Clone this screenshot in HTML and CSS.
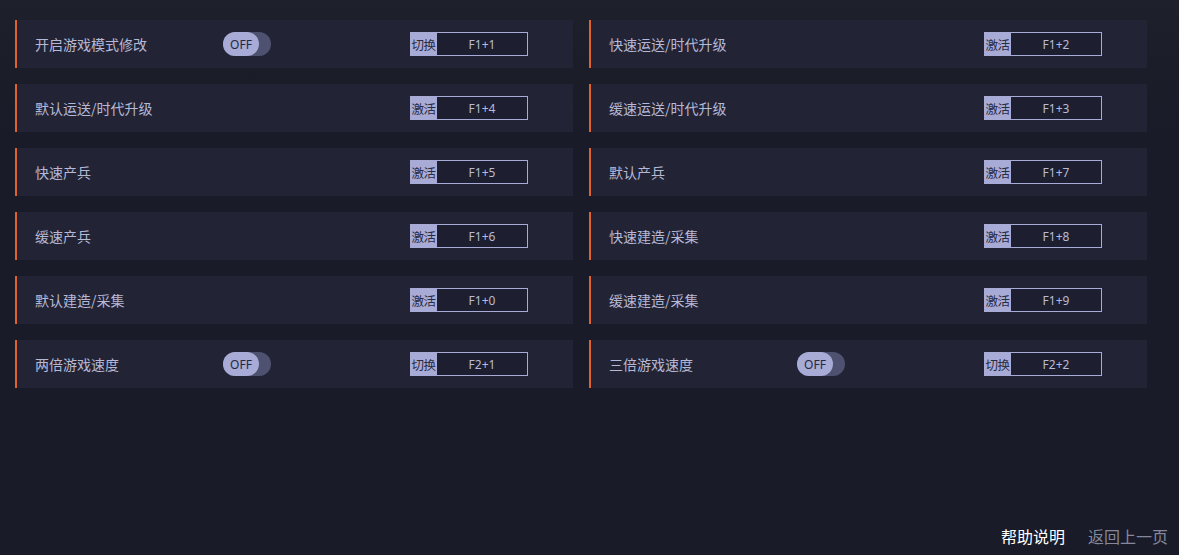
FILE: index.html
```html
<!DOCTYPE html>
<html lang="zh-CN">
<head>
<meta charset="utf-8">
<title>修改器</title>
<link rel="stylesheet" href="styles.css">
</head>
<body>
<div class="page">
  <main class="grid">
    <div class="card"><span class="label">开启游戏模式修改</span><span class="toggle"><span class="knob">OFF</span></span><span class="key"><span class="act">切换</span><span class="combo">F1+1</span></span></div>
    <div class="card"><span class="label">快速运送/时代升级</span><span class="key"><span class="act">激活</span><span class="combo">F1+2</span></span></div>
    <div class="card"><span class="label">默认运送/时代升级</span><span class="key"><span class="act">激活</span><span class="combo">F1+4</span></span></div>
    <div class="card"><span class="label">缓速运送/时代升级</span><span class="key"><span class="act">激活</span><span class="combo">F1+3</span></span></div>
    <div class="card"><span class="label">快速产兵</span><span class="key"><span class="act">激活</span><span class="combo">F1+5</span></span></div>
    <div class="card"><span class="label">默认产兵</span><span class="key"><span class="act">激活</span><span class="combo">F1+7</span></span></div>
    <div class="card"><span class="label">缓速产兵</span><span class="key"><span class="act">激活</span><span class="combo">F1+6</span></span></div>
    <div class="card"><span class="label">快速建造/采集</span><span class="key"><span class="act">激活</span><span class="combo">F1+8</span></span></div>
    <div class="card"><span class="label">默认建造/采集</span><span class="key"><span class="act">激活</span><span class="combo">F1+0</span></span></div>
    <div class="card"><span class="label">缓速建造/采集</span><span class="key"><span class="act">激活</span><span class="combo">F1+9</span></span></div>
    <div class="card"><span class="label">两倍游戏速度</span><span class="toggle"><span class="knob">OFF</span></span><span class="key"><span class="act">切换</span><span class="combo">F2+1</span></span></div>
    <div class="card"><span class="label">三倍游戏速度</span><span class="toggle"><span class="knob">OFF</span></span><span class="key"><span class="act">切换</span><span class="combo">F2+2</span></span></div>
  </main>
  <footer class="footer">
    <a class="link help">帮助说明</a>
    <a class="link back">返回上一页</a>
  </footer>
</div>
</body>
</html>
```

FILE: styles.css
```css
* { box-sizing: border-box; }
html, body {
  margin: 0;
  padding: 0;
  height: 100%;
}
body {
  background: #191b28;
  font-family: "Noto Sans CJK SC", "Noto Sans", sans-serif;
  color: #b9bcd9;
  overflow: hidden;
}
.page {
  height: 100%;
  display: flex;
  flex-direction: column;
  padding: 20px 0 0 15px;
  background: linear-gradient(180deg, #1e202c 0px, #1b1d29 60px, #191b28 140px);
}
.grid {
  display: grid;
  grid-template-columns: 558px 558px;
  column-gap: 16px;
  row-gap: 16px;
}
.card {
  height: 48px;
  background: #222436;
  border-left: 2px solid #e0622a;
  display: flex;
  align-items: center;
  padding-left: 18px;
}
.label {
  width: 188px;
  font-size: 14px;
  color: #b6b9d6;
  white-space: nowrap;
}
.toggle {
  width: 48px;
  height: 24px;
  border-radius: 12px;
  background: #4e5270;
  display: flex;
}
.knob {
  width: 36px;
  height: 24px;
  border-radius: 12px;
  background: #a7abd6;
  color: #262840;
  font-family: "Noto Sans", "Liberation Sans", sans-serif;
  font-size: 12px;
  display: flex;
  align-items: center;
  justify-content: center;
}
.key {
  margin-left: auto;
  margin-right: 45px;
  display: flex;
  height: 24px;
}
.act {
  width: 27px;
  background: #a7abd6;
  color: #2a2c44;
  font-size: 12.5px;
  display: flex;
  align-items: center;
  justify-content: center;
  white-space: nowrap;
  letter-spacing: -0.5px;
}
.combo {
  width: 91px;
  border: 1px solid #a7abd6;
  border-left: none;
  background: #1d1f30;
  color: #b8bbd8;
  font-family: "Noto Sans", "Liberation Sans", sans-serif;
  font-size: 12px;
  display: flex;
  align-items: center;
  justify-content: center;
}
.footer {
  margin-top: auto;
  display: flex;
  justify-content: flex-end;
  gap: 23px;
  padding: 0 11px 8px 0;
}
.link {
  font-size: 16px;
  line-height: 22px;
  cursor: pointer;
}
.help { color: #ffffff; }
.back { color: #85879a; }
```
